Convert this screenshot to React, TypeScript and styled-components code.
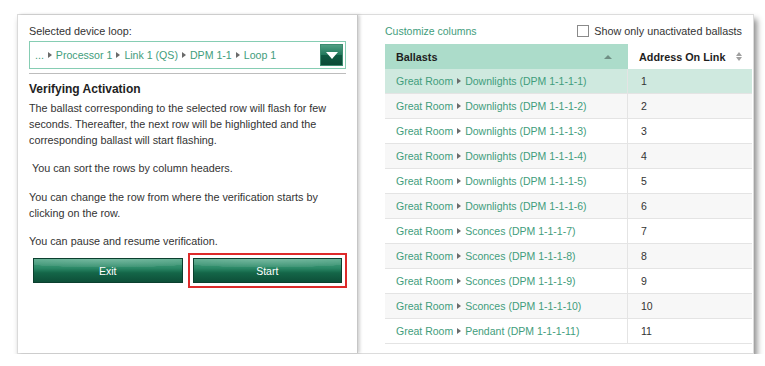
import React from "react";
import styled, { createGlobalStyle } from "styled-components";

const colors = {
  teal: "#3f9d7c",
  tealLight: "#86cdb3",
  header: "#acdcca",
  selected: "#cfe9df",
  text: "#2b2b2b",
  line: "#e4e4e4",
  darkGreen: "#0f5640",
};

const GlobalStyle = createGlobalStyle`
  html, body {
    margin: 0;
    padding: 0;
    background: #ffffff;
    font-family: "Liberation Sans", Arial, sans-serif;
  }
`;

const Frame = styled.div`
  display: flex;
  margin: 14px 0 0 17px;
  width: 737px;
  height: 340px;
  background: #fff;
  border: 1px solid #dcdcdc;
  box-sizing: border-box;
  box-shadow: 3px 5px 6px rgba(0, 0, 0, 0.45);
`;

const LeftPanel = styled.div`
  width: 340px;
  flex-shrink: 0;
  box-sizing: border-box;
  padding: 9px 11px 0 11px;
  border-right: 1px solid #c6c6c6;
  box-shadow: 2px 0 3px rgba(0, 0, 0, 0.18);
  position: relative;
  z-index: 1;
  color: ${colors.text};
  font-size: 10.8px;
`;

const Label = styled.div`
  line-height: 14px;
  color: #333;
`;

const Select = styled.div`
  margin-top: 3px;
  height: 28px;
  box-sizing: border-box;
  border: 1px solid ${colors.tealLight};
  display: flex;
  align-items: center;
  justify-content: space-between;
  padding: 0 2px 0 5px;
  color: ${colors.teal};
  font-size: 10.6px;
`;

const Path = styled.span`
  display: flex;
  align-items: center;
`;

const Sep = styled.span`
  display: inline-block;
  width: 0;
  height: 0;
  border-left: 4px solid #6a6a6a;
  border-top: 3px solid transparent;
  border-bottom: 3px solid transparent;
  margin: 0 4px;
`;

const DropButton = styled.div`
  width: 23px;
  height: 22px;
  box-sizing: border-box;
  border: 1px solid #3d8c70;
  background: linear-gradient(to bottom, #4f9f83 0%, #23795c 48%, #0f5a42 52%, #0c4b37 100%);
  display: flex;
  align-items: center;
  justify-content: center;
`;

const DownArrow = styled.span`
  width: 0;
  height: 0;
  border-top: 7px solid #fff;
  border-left: 6px solid transparent;
  border-right: 6px solid transparent;
`;

const Rule = styled.div`
  margin-top: 4px;
  height: 1px;
  background: #bdbdbd;
`;

const Title = styled.div`
  margin-top: 7px;
  font-weight: bold;
  font-size: 12px;
  line-height: 16px;
  color: #222;
`;

const Para = styled.p<{ $gap: number }>`
  margin: ${(p) => p.$gap}px 0 0;
  line-height: 16px;
  white-space: pre-wrap;
  color: #333;
`;

const ButtonRow = styled.div`
  margin: 9px 4px 0;
  display: grid;
  grid-template-columns: 1fr 1fr;
  gap: 10px;
`;

const GreenButton = styled.button<{ $highlight?: boolean }>`
  height: 25px;
  border: 1px solid #0b3f2e;
  border-radius: 0;
  color: #fff;
  font-family: "Liberation Sans", Arial, sans-serif;
  font-size: 10.5px;
  cursor: pointer;
  background:
    radial-gradient(ellipse 120% 60% at 50% 0%, rgba(255, 255, 255, 0.22) 0%, rgba(255, 255, 255, 0.08) 60%, rgba(255, 255, 255, 0) 61%),
    linear-gradient(to bottom, #4fa585 0%, #2a8866 40%, #146648 60%, #0d4f38 100%);
  outline: ${(p) => (p.$highlight ? "2px solid #dd2a2a" : "none")};
  outline-offset: 3px;
`;

const RightPanel = styled.div`
  flex: 1;
  padding: 9px 1px 0 27px;
  font-size: 10.5px;
`;

const Toolbar = styled.div`
  display: flex;
  align-items: center;
  justify-content: space-between;
  height: 14px;
  padding-right: 10px;
  margin-bottom: 6px;
`;

const LinkText = styled.span`
  color: ${colors.teal};
  font-size: 10.5px;
`;

const CheckLabel = styled.label`
  display: flex;
  align-items: center;
  gap: 5px;
  color: #333;
  font-size: 10.8px;
`;

const Box = styled.span`
  width: 10px;
  height: 10px;
  border: 1px solid #8a8a8a;
  background: #fff;
`;

const Table = styled.div`
  display: grid;
  grid-template-columns: 243px 1fr;
`;

const HeadCell = styled.div<{ $active?: boolean }>`
  height: 25px;
  box-sizing: border-box;
  display: flex;
  align-items: center;
  justify-content: space-between;
  padding: 0 10px 0 11px;
  font-weight: bold;
  font-size: 10.8px;
  color: #1e1e1e;
  background: ${(p) => (p.$active ? colors.header : "#fff")};
`;

const UpArrow = styled.span`
  width: 0;
  height: 0;
  border-bottom: 4px solid #6f8f84;
  border-left: 4px solid transparent;
  border-right: 4px solid transparent;
  margin-right: 6px;
`;

const SortIcon = styled.span`
  display: flex;
  flex-direction: column;
  gap: 1px;
  &::before,
  &::after {
    content: "";
    width: 0;
    height: 0;
    border-left: 3px solid transparent;
    border-right: 3px solid transparent;
  }
  &::before {
    border-bottom: 4px solid #a0a0a0;
  }
  &::after {
    border-top: 4px solid #a0a0a0;
  }
`;

const Cell = styled.div<{ $bg: string; $first?: boolean }>`
  height: 25px;
  box-sizing: border-box;
  display: flex;
  align-items: center;
  padding-left: ${(p) => (p.$first ? 11 : 13)}px;
  background: ${(p) => p.$bg};
  border-bottom: 1px solid ${colors.line};
  border-right: ${(p) => (p.$first ? `1px solid ${colors.line}` : "none")};
  color: ${(p) => (p.$first ? colors.teal : "#333")};
`;

const rows = [
  ["Downlights", "1-1-1-1"],
  ["Downlights", "1-1-1-2"],
  ["Downlights", "1-1-1-3"],
  ["Downlights", "1-1-1-4"],
  ["Downlights", "1-1-1-5"],
  ["Downlights", "1-1-1-6"],
  ["Sconces", "1-1-1-7"],
  ["Sconces", "1-1-1-8"],
  ["Sconces", "1-1-1-9"],
  ["Sconces", "1-1-1-10"],
  ["Pendant", "1-1-1-11"],
];

const App = () => {
  return (
    <>
      <GlobalStyle />
      <Frame>
        <LeftPanel>
          <Label>Selected device loop:</Label>
          <Select>
            <Path>
              ...<Sep />Processor 1<Sep />Link 1 (QS)<Sep />DPM 1-1<Sep />Loop 1
            </Path>
            <DropButton>
              <DownArrow />
            </DropButton>
          </Select>
          <Rule />
          <Title>Verifying Activation</Title>
          <Para $gap={3}>
            The ballast corresponding to the selected row will flash for few
            seconds. Thereafter, the next row will be highlighted and the
            corresponding ballast will start flashing.
          </Para>
          <Para $gap={12}> You can sort the rows by column headers.</Para>
          <Para $gap={13}>
            You can change the row from where the verification starts by
            clicking on the row.
          </Para>
          <Para $gap={12}>You can pause and resume verification.</Para>
          <ButtonRow>
            <GreenButton>Exit</GreenButton>
            <GreenButton $highlight>Start</GreenButton>
          </ButtonRow>
        </LeftPanel>
        <RightPanel>
          <Toolbar>
            <LinkText>Customize columns</LinkText>
            <CheckLabel>
              <Box />
              Show only unactivated ballasts
            </CheckLabel>
          </Toolbar>
          <Table>
            <HeadCell $active>
              Ballasts
              <UpArrow />
            </HeadCell>
            <HeadCell>
              Address On Link
              <SortIcon />
            </HeadCell>
            {rows.map(([name, id], i) => {
              const bg = i === 0 ? colors.selected : i % 2 === 1 ? "#f7f7f7" : "#ffffff";
              return (
                <React.Fragment key={id}>
                  <Cell $bg={bg} $first>
                    Great Room<Sep />
                    {name} (DPM {id})
                  </Cell>
                  <Cell $bg={bg}>{i + 1}</Cell>
                </React.Fragment>
              );
            })}
          </Table>
        </RightPanel>
      </Frame>
    </>
  );
};

export default App;
